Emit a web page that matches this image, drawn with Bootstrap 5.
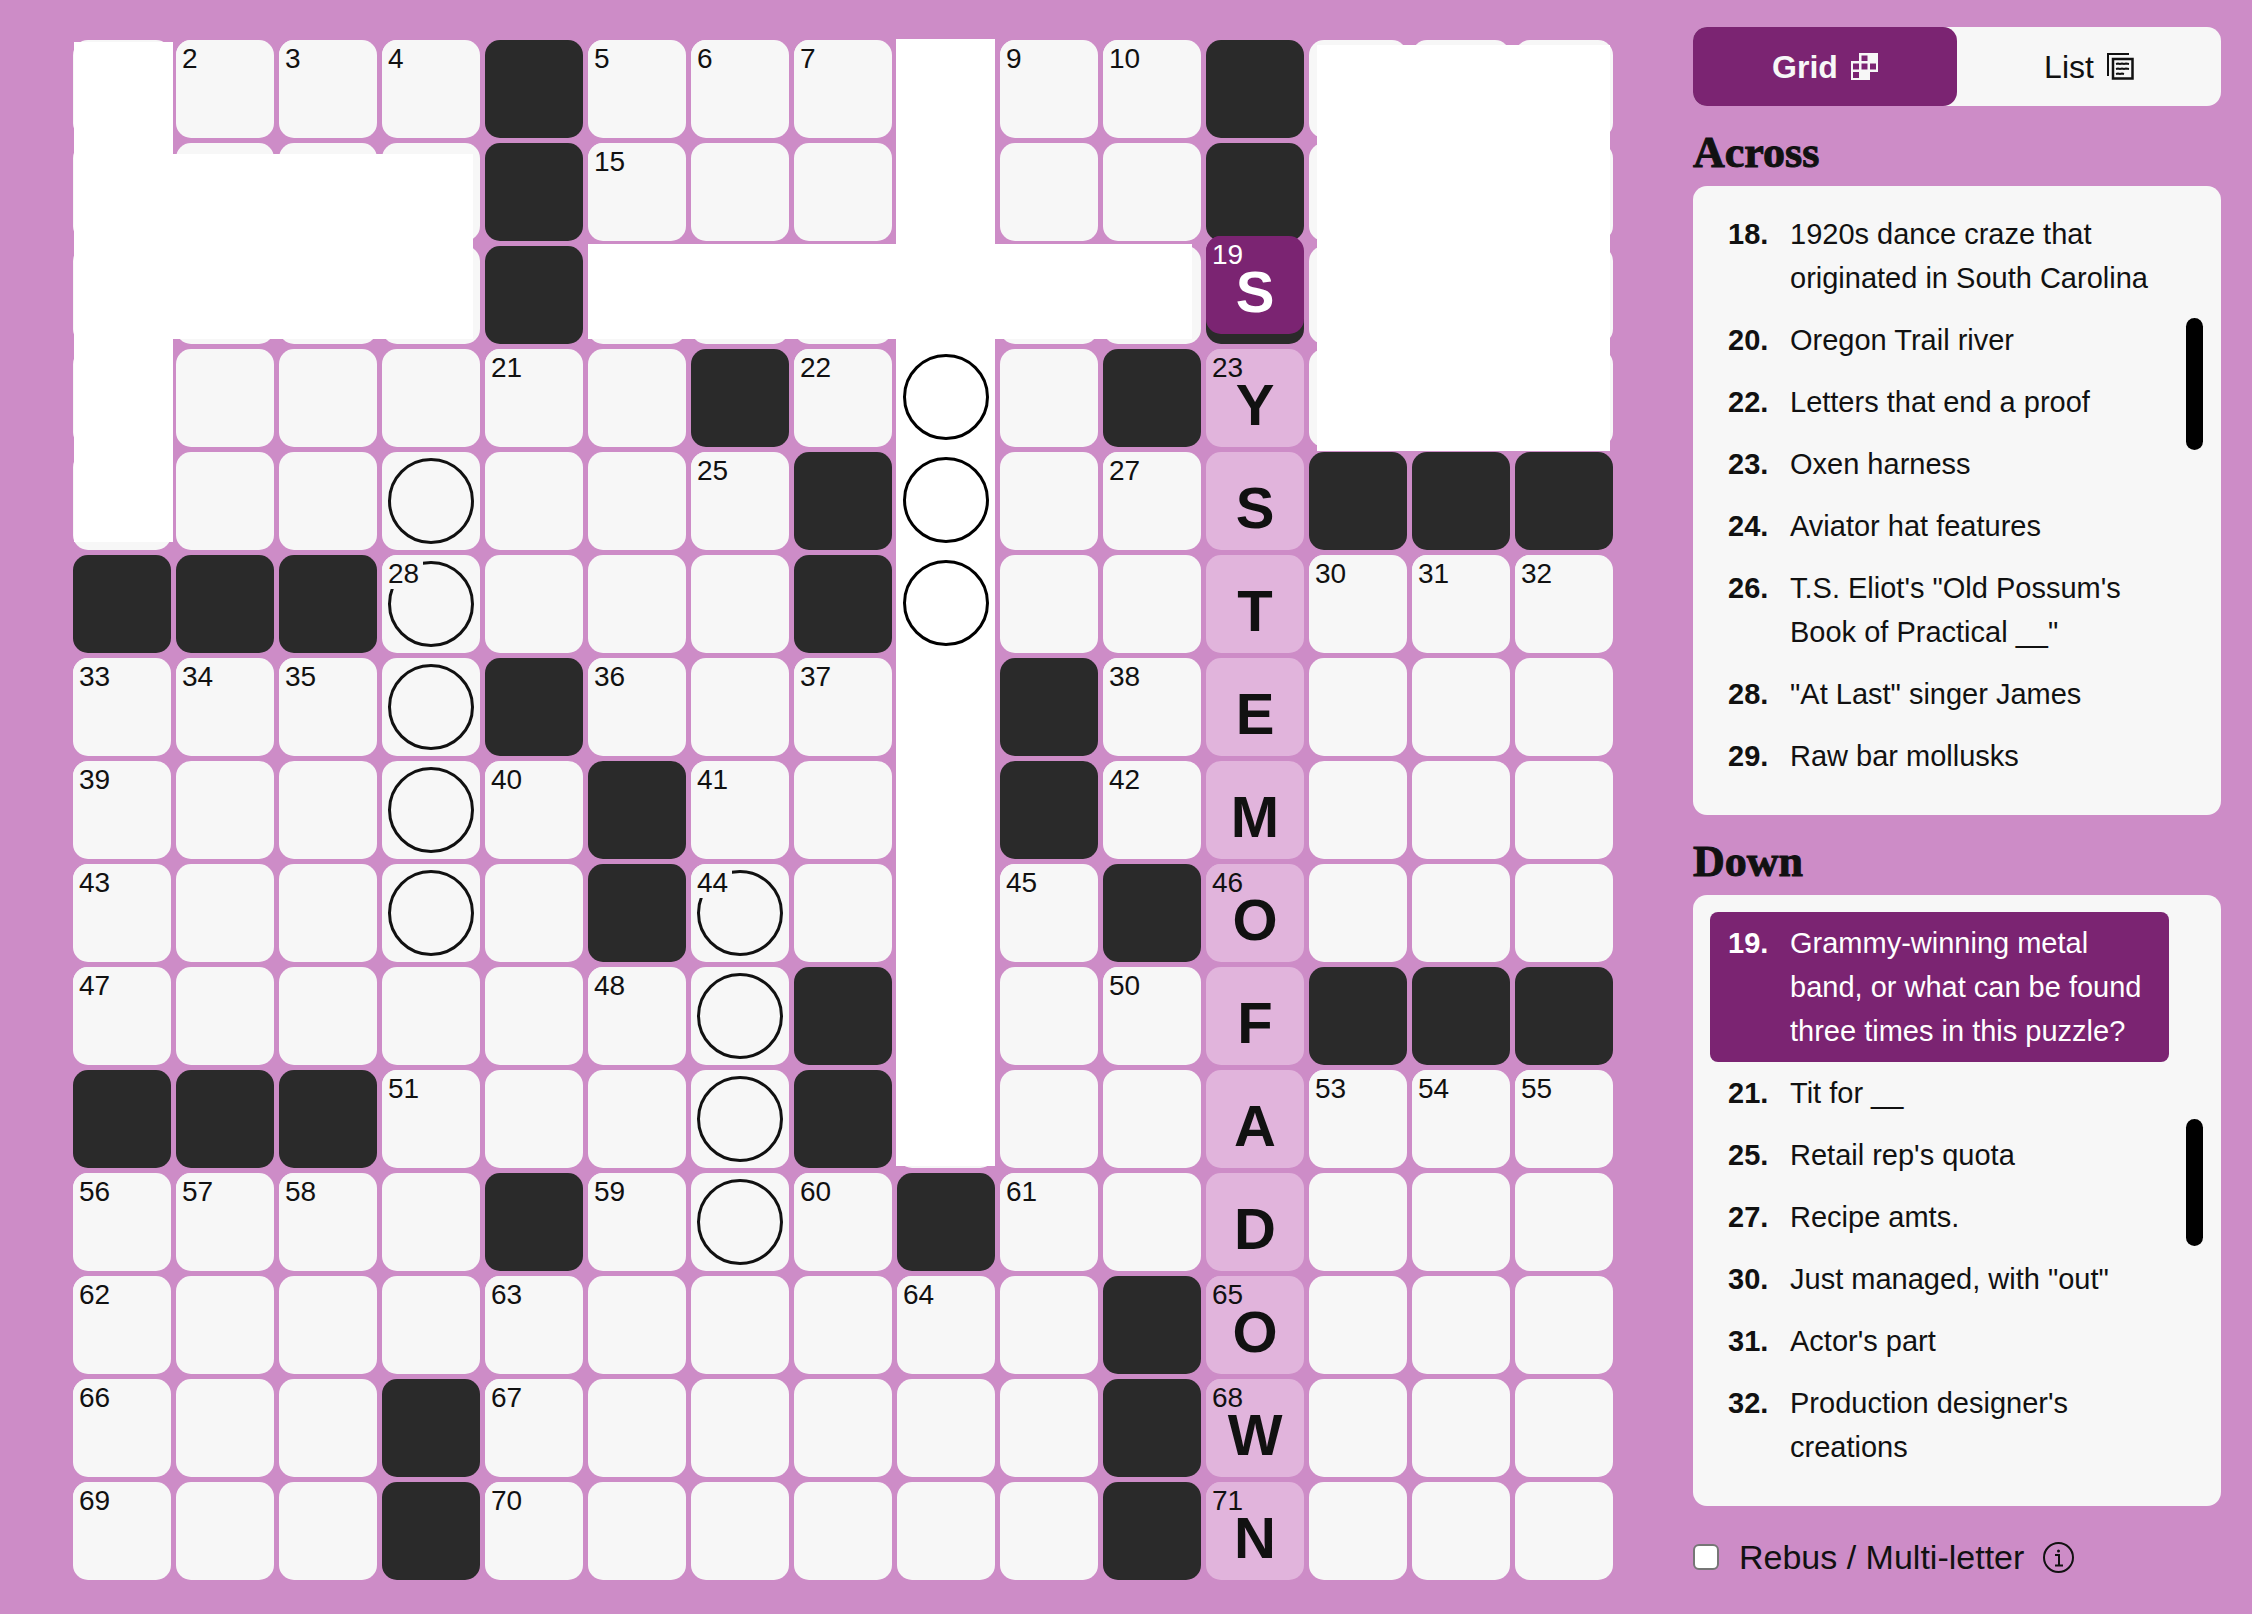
<!DOCTYPE html>
<html lang="en">
<head>
<meta charset="utf-8">
<meta name="viewport" content="width=device-width, initial-scale=1">
<title>Crossword</title>
<link href="https://cdn.jsdelivr.net/npm/bootstrap@5.3.0/dist/css/bootstrap.min.css" rel="stylesheet">
<style>
  :root { --ink: #111; --paper: #f7f7f7; --plum: #7b2472; --orchid: #cd8cc7; --pink: #e1b4dc; --block: #2a2a2a; }
  body { background: var(--orchid); color: var(--ink); font-family: "Liberation Sans", Arial, sans-serif; font-size: 29px; }
  .game { padding: 27px 31px 31px 73px; column-gap: 80px; }
  .board { display: grid; grid-template-columns: repeat(15, minmax(0, 1fr)); gap: 5px; margin-top: 13px; }
  .sq { position: relative; aspect-ratio: 1; background: var(--paper); border-radius: 15px; padding-bottom: 13px; font-size: 58px; font-weight: 700; line-height: 58px; }
  .sq-block { background: var(--block); }
  .sq-word { background: var(--pink); }
  .sq-now { background: var(--plum); color: #fff; top: -10px; z-index: 1; }
  .sq-num { position: absolute; top: 0; left: 0; padding: 4px 4px 0 6px; background: inherit; border-top-left-radius: inherit; font-size: 28px; font-weight: 400; line-height: 30px; }
  .ring { position: absolute; inset: 6px; border: 3px solid var(--ink); border-radius: 50%; }
  .ring-top { position: static; margin: 5px 6px 7px; border-color: #000; z-index: 3; }
  .patch { background: #fff; z-index: 2; }
  .patch-a { grid-area: 1 / 1 / span 5 / span 1; margin: 2px -2px 8px 1px; }
  .patch-b { grid-area: 2 / 1 / span 2 / span 4; margin: 11px 7px 5px 1px; }
  .patch-c { grid-area: 1 / 9 / span 11 / span 1; margin: -1px 0 2px -1px; }
  .patch-d { grid-area: 3 / 6 / span 1 / span 6; margin: -2px 9px 5px 0; }
  .patch-e { grid-area: 1 / 13 / span 4 / span 3; margin: 5px 3px -4px 8px; }
  .side { width: 528px; }
  .tabs { background: var(--paper); border-radius: 14px; }
  .tab-btn { height: 79px; font-size: 32px; column-gap: 13px; border: 0; border-radius: 14px; color: var(--ink); }
  .tab-btn.active { background: var(--plum) !important; color: var(--paper) !important; font-weight: 700; }
  .head { font: 700 44px/48px "Liberation Serif", "Times New Roman", serif; -webkit-text-stroke: 1px var(--ink); margin: 23px 0 9px; }
  .panel { background: var(--paper); border-radius: 14px; padding: 17px 18px 28px 17px; column-gap: 17px; }
  .clue { line-height: 44px; padding: 9px 16px 9px 18px; border-radius: 8px; }
  .clue-now { background: var(--plum); color: #fff; }
  .clue-no { width: 62px; font-weight: 700; }
  .thumb { width: 17px; border-radius: 9px; background: #000; }
  .thumb-a { height: 132px; margin-top: 115px; }
  .thumb-d { height: 127px; margin-top: 207px; }
  .rebus { margin-top: 26px; font-size: 34px; line-height: 50px; }
  .rebus .form-check-input { width: 26px; height: 26px; border: 2px solid #767676; border-radius: 6px; }
  .rebus label { margin: 0 19px 0 20px; }
</style>
</head>
<body>
<main class="game d-flex align-items-start">
  <div class="board flex-grow-1" id="board"></div>

  <aside class="side flex-shrink-0">
    <div class="tabs d-flex">
      <button type="button" class="btn tab-btn active w-50 d-flex align-items-center justify-content-center p-0">Grid
        <svg width="27" height="27" viewBox="0 0 27 27" aria-hidden="true"><path fill="currentColor" fill-rule="evenodd" d="M8 0h19v19h-8v8H0V8h8zM10.500 2.500v5.500h6V2.500zM2 10.500v6h6v-6zM10.500 10.500v6h6v-6zM19 10.500v6h6v-6zM2 19v6h6v-6z"/></svg>
      </button>
      <button type="button" class="btn tab-btn w-50 d-flex align-items-center justify-content-center p-0">List
        <svg width="27" height="27" viewBox="0 0 27 27" fill="none" stroke="currentColor" stroke-width="2" aria-hidden="true"><path d="M1 23V1h21"/><path stroke-width="2.500" d="M6 6h19.500v19.500H6z"/><path d="M9 11l2-.5 2 .5 2-.5 2 .5 2-.5 3 .5M9 16l2-.5 2 .5 2-.5 2 .5 2-.5 3 .5M9 21l2-.5 2 .5 2-.5 2 .5"/></svg>
      </button>
    </div>

    <h2 class="head">Across</h2>
    <div class="panel d-flex align-items-start">
      <ol class="list-unstyled mb-0 flex-grow-1">
        <li class="clue d-flex"><span class="clue-no flex-shrink-0">18.</span><span>1920s dance craze that originated in South Carolina</span></li>
        <li class="clue d-flex"><span class="clue-no flex-shrink-0">20.</span><span>Oregon Trail river</span></li>
        <li class="clue d-flex"><span class="clue-no flex-shrink-0">22.</span><span>Letters that end a proof</span></li>
        <li class="clue d-flex"><span class="clue-no flex-shrink-0">23.</span><span>Oxen harness</span></li>
        <li class="clue d-flex"><span class="clue-no flex-shrink-0">24.</span><span>Aviator hat features</span></li>
        <li class="clue d-flex"><span class="clue-no flex-shrink-0">26.</span><span>T.S. Eliot's "Old Possum's Book of Practical __"</span></li>
        <li class="clue d-flex"><span class="clue-no flex-shrink-0">28.</span><span>"At Last" singer James</span></li>
        <li class="clue d-flex"><span class="clue-no flex-shrink-0">29.</span><span>Raw bar mollusks</span></li>
      </ol>
      <div class="thumb thumb-a flex-shrink-0"></div>
    </div>

    <h2 class="head">Down</h2>
    <div class="panel d-flex align-items-start">
      <ol class="list-unstyled mb-0 flex-grow-1">
        <li class="clue clue-now d-flex"><span class="clue-no flex-shrink-0">19.</span><span>Grammy-winning metal band, or what can be found three times in this puzzle?</span></li>
        <li class="clue d-flex"><span class="clue-no flex-shrink-0">21.</span><span>Tit for __</span></li>
        <li class="clue d-flex"><span class="clue-no flex-shrink-0">25.</span><span>Retail rep's quota</span></li>
        <li class="clue d-flex"><span class="clue-no flex-shrink-0">27.</span><span>Recipe amts.</span></li>
        <li class="clue d-flex"><span class="clue-no flex-shrink-0">30.</span><span>Just managed, with "out"</span></li>
        <li class="clue d-flex"><span class="clue-no flex-shrink-0">31.</span><span>Actor's part</span></li>
        <li class="clue d-flex"><span class="clue-no flex-shrink-0">32.</span><span>Production designer's creations</span></li>
      </ol>
      <div class="thumb thumb-d flex-shrink-0"></div>
    </div>

    <div class="rebus d-flex align-items-center">
      <input class="form-check-input m-0" type="checkbox" id="rebus">
      <label for="rebus">Rebus / Multi-letter</label>
      <svg width="31" height="31" viewBox="0 0 31 31" fill="none" stroke="#111" stroke-width="2" role="img" aria-label="About rebus"><circle cx="15.500" cy="15.500" r="14.500"/><path d="M12 13h4v10M12 23.500h8"/><circle cx="15.500" cy="9" r="1.500" fill="#111" stroke="none"/></svg>
    </div>
  </aside>
</main>

<script>
  // One entry per square: "#" is a block, "." is blank, anything else is the clue number.
  const rows = [
    ". 2 3 4 # 5 6 7 . 9 10 # . . .",
    ". . . . # 15 . . . . . # . . .",
    ". . . . # . . . . . . # . . .",
    ". . . . 21 . # 22 . . # 23 . . .",
    ". . . . . . 25 # . . 27 . # # #",
    "# # # 28 . . . # . . . . 30 31 32",
    "33 34 35 . # 36 . 37 . # 38 . . . .",
    "39 . . . 40 # 41 . . # 42 . . . .",
    "43 . . . . # 44 . . 45 # 46 . . .",
    "47 . . . . 48 . # . . 50 . # # #",
    "# # # 51 . . . # . . . . 53 54 55",
    "56 57 58 . # 59 . 60 # 61 . . . . .",
    "62 . . . 63 . . . 64 . # 65 . . .",
    "66 . . # 67 . . . . . # 68 . . .",
    "69 . . # 70 . . . . . # 71 . . ."
  ].map(r => r.split(" "));
  const answer = "YSTEMOFADOWN", wordCol = 11, firstRow = 3;
  const rings = new Set(["4,3", "5,3", "6,3", "7,3", "8,3", "8,6", "9,6", "10,6", "11,6"]);
  const board = document.getElementById("board");

  function add(cls, r, c, html) {
    const el = document.createElement("div");
    el.className = cls;
    if (r !== null) el.style.gridArea = (r + 1) + " / " + (c + 1);
    el.innerHTML = html || "";
    board.append(el);
  }
  const base = "sq d-flex align-items-end justify-content-center";
  rows.forEach((row, r) => row.forEach((v, c) => {
    if (v === "#") return add(base + " sq-block", r, c);
    const inWord = c === wordCol && r >= firstRow;
    let html = rings.has(r + "," + c) ? '<span class="ring"></span>' : "";
    if (v !== ".") html += '<span class="sq-num">' + v + "</span>";
    if (inWord) html += '<span class="position-relative">' + answer[r - firstRow] + "</span>";
    add(base + (inWord ? " sq-word" : ""), r, c, html);
  }));
  add(base + " sq-now", 2, wordCol, '<span class="sq-num">19</span><span class="position-relative">S</span>');
  ["a", "b", "c", "d", "e"].forEach(p => add("patch patch-" + p, null));
  [3, 4, 5].forEach(r => add("ring ring-top", r, 8));
</script>
<script src="https://cdn.jsdelivr.net/npm/bootstrap@5.3.0/dist/js/bootstrap.bundle.min.js"></script>
</body>
</html>
